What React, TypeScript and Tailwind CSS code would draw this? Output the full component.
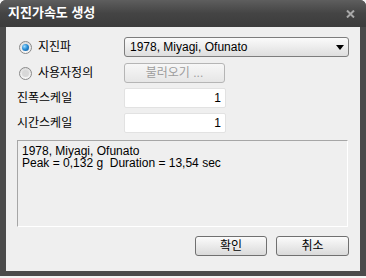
import React from "react";

const font = { fontFamily: '"Liberation Sans", "Noto Sans CJK KR", sans-serif' };

function Radio({ checked }: { checked: boolean }) {
  return (
    <div className="w-[13px] h-[13px] rounded-full border border-[#8a8a8a] bg-gradient-to-b from-[#dcdcdc] to-[#f8f8f8] flex items-center justify-center">
      {checked ? (
        <div className="w-[7px] h-[7px] rounded-full bg-[radial-gradient(circle_at_35%_35%,#9fdcff_0%,#2a8fd6_45%,#0b4f94_100%)]" />
      ) : (
        <div className="w-[7px] h-[7px] rounded-full bg-[#d8d8d8]" />
      )}
    </div>
  );
}

export default function App() {
  return (
    <div className="w-[366px] h-[278px] bg-[#f4f4f4]" style={font}>
      <div className="w-[366px] h-[276px] bg-[#4b4b4b] rounded-t-[6px] flex flex-col">
        <div className="h-[27px] flex items-start justify-between px-[8px] pt-[5px] rounded-t-[6px] bg-gradient-to-b from-[#5e5e5e] via-[#444444] to-[#3c3c3c]">
          <span className="text-white font-bold text-[13px] leading-[15px]">지진가속도 생성</span>
          <svg width="9" height="8" viewBox="0 0 9 8" className="mt-[5px] mr-[3px]">
            <path d="M1 0.5 L8 7.5 M8 0.5 L1 7.5" stroke="#a8a8a8" strokeWidth="2" />
          </svg>
        </div>
        <div className="flex-1 px-[6px] pb-[5px] flex">
          <div className="flex-1 bg-[#efefef] pt-[10px] px-[11px] flex flex-col text-[12px] text-black">
            <div className="h-[20px] flex items-center">
              <div className="w-[107px] flex items-center gap-[6px] pl-[2px]">
                <Radio checked />
                <span className="leading-[14px]">지진파</span>
              </div>
              <div className="flex-1 h-[20px] rounded-[3px] border border-[#7d7d7d] bg-gradient-to-b from-[#fbfbfb] to-[#dedede] flex items-center justify-between pl-[5px] pr-[4px]">
                <span className="leading-[14px]">1978, Miyagi, Ofunato</span>
                <svg width="8" height="5" viewBox="0 0 8 5">
                  <path d="M0 0 L8 0 L4 5 Z" fill="#000" />
                </svg>
              </div>
            </div>
            <div className="h-[20px] mt-[6px] flex items-center">
              <div className="w-[107px] flex items-center gap-[6px] pl-[2px]">
                <Radio checked={false} />
                <span className="leading-[14px]">사용자정의</span>
              </div>
              <div className="w-[101px] h-[20px] rounded-[3px] border border-[#b5b5b5] bg-gradient-to-b from-[#f7f7f7] to-[#e6e6e6] flex items-center justify-center">
                <span className="leading-[14px] text-[#9d9d9d]">불러오기 ...</span>
              </div>
            </div>
            <div className="h-[20px] mt-[5px] flex items-center">
              <span className="w-[107px] leading-[14px]">진폭스케일</span>
              <div className="w-[102px] h-[20px] bg-white border border-[#e2e2e2] rounded-[2px] flex items-center justify-end pr-[4px]">
                <span className="leading-[14px]">1</span>
              </div>
            </div>
            <div className="h-[20px] mt-[5px] flex items-center">
              <span className="w-[107px] leading-[14px]">시간스케일</span>
              <div className="w-[102px] h-[20px] bg-white border border-[#e2e2e2] rounded-[2px] flex items-center justify-end pr-[4px]">
                <span className="leading-[14px]">1</span>
              </div>
            </div>
            <div className="mt-[7px] h-[87px] w-[331px] border border-t-[#a6a6a6] border-l-[#a6a6a6] border-r-white border-b-white pl-[4px] pt-[4px] leading-[12px]">
              <div>1978, Miyagi, Ofunato</div>
              <div className="whitespace-pre">Peak = 0,132 g  Duration = 13,54 sec</div>
            </div>
            <div className="mt-[9px] flex justify-end gap-[9px] pr-0">
              <div className="w-[72px] h-[20px] rounded-[3px] border border-[#707070] bg-gradient-to-b from-[#fbfbfb] to-[#dadada] flex items-center justify-center">
                <span className="leading-[14px]">확인</span>
              </div>
              <div className="w-[73px] h-[20px] rounded-[3px] border border-[#707070] bg-gradient-to-b from-[#fbfbfb] to-[#dadada] flex items-center justify-center">
                <span className="leading-[14px]">취소</span>
              </div>
            </div>
          </div>
        </div>
      </div>
    </div>
  );
}
